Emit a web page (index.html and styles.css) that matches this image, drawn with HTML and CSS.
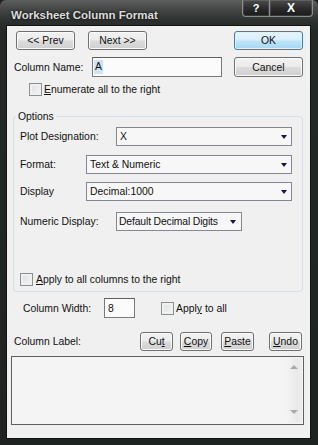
FILE: index.html
```html
<!DOCTYPE html>
<html>
<head>
<meta charset="utf-8">
<link rel="stylesheet" href="styles.css">
</head>
<body>
<div class="window">
  <div class="titlebar">
    <span class="title">Worksheet Column Format</span>
    <div class="caption">
      <span class="cbtn help">?</span><span class="cbtn close">X</span>
    </div>
  </div>
  <div class="client">
    <div class="row row-nav">
      <button class="btn nav prev">&lt;&lt; Prev</button>
      <button class="btn nav next">Next &gt;&gt;</button>
      <button class="btn default ok">OK</button>
    </div>
    <div class="row row-name">
      <span class="lbl lbl-name">Column Name:</span>
      <div class="input name-input"><span class="selected">A</span></div>
      <button class="btn cancel">Cancel</button>
    </div>
    <div class="row row-enum">
      <span class="check"></span><span class="check-text"><u>E</u>numerate all to the right</span>
    </div>
    <div class="group">
      <span class="legend">Options</span>
      <div class="row grow row-plot">
        <span class="lbl lbl-plot">Plot Designation:</span>
        <div class="combo combo-plot"><span class="combo-text">X</span><span class="arrow"></span></div>
      </div>
      <div class="row grow row-format">
        <span class="lbl lbl-short">Format:</span>
        <div class="combo combo-wide"><span class="combo-text">Text &amp; Numeric</span><span class="arrow"></span></div>
      </div>
      <div class="row grow row-display">
        <span class="lbl lbl-short">Display</span>
        <div class="combo combo-wide"><span class="combo-text">Decimal:1000</span><span class="arrow"></span></div>
      </div>
      <div class="row grow row-numeric">
        <span class="lbl lbl-plot">Numeric Display:</span>
        <div class="combo combo-numeric"><span class="combo-text">Default Decimal Digits</span><span class="arrow"></span></div>
      </div>
      <div class="row grow row-apply">
        <span class="check"></span><span class="check-text"><u>A</u>pply to all columns to the right</span>
      </div>
    </div>
    <div class="row row-width">
      <span class="lbl lbl-width">Column Width:</span>
      <div class="input width-input">8</div>
      <span class="check check-all"></span><span class="check-text">Appl<u>y</u> to all</span>
    </div>
    <div class="row row-label">
      <span class="lbl lbl-label">Column Label:</span>
      <button class="btn small cut">Cu<u>t</u></button>
      <button class="btn small copy"><u>C</u>opy</button>
      <button class="btn small paste"><u>P</u>aste</button>
      <button class="btn small undo"><u>U</u>ndo</button>
    </div>
    <div class="memo">
      <div class="vscroll">
        <span class="sarrow up"></span>
        <span class="sarrow down"></span>
      </div>
    </div>
  </div>
</div>
</body>
</html>
```

FILE: styles.css
```css
* { box-sizing: border-box; }
html, body { margin: 0; padding: 0; }
body {
  width: 318px;
  height: 445px;
  overflow: hidden;
  font-family: "Liberation Sans", Arial, sans-serif;
  font-size: 10.4px;
  color: #111;
  background: #1d2320;
}
.window {
  width: 318px;
  height: 445px;
  display: flex;
  flex-direction: column;
  background: linear-gradient(180deg, #5d605e 0px, #474a49 8px, #2e3230 20px, #232926 30px, #1d2320 100%);
  border-radius: 6px 6px 0 0;
}
.titlebar {
  height: 26px;
  flex-shrink: 0;
  display: flex;
  align-items: flex-start;
}
.title {
  font-weight: bold;
  font-size: 11.5px;
  line-height: 13px;
  color: #dcdcdc;
  margin: 9px 0 0 11px;
  text-shadow: 0 0 3px #000;
}
.caption {
  margin-left: auto;
  margin-right: 5px;
  display: flex;
}
.cbtn {
  height: 17px;
  display: flex;
  align-items: center;
  justify-content: center;
  color: #fff;
  font-weight: bold;
  font-size: 11px;
  border: 1px solid #8c8c8c;
  border-top: none;
  background: linear-gradient(#4c4c4c, #2a2a2a 55%, #1b1b1b);
  box-shadow: inset 0 0 0 1px rgba(255, 255, 255, 0.12);
}
.help { width: 28px; border-radius: 0 0 0 4px; }
.close { width: 43px; border-left: none; border-radius: 0 0 4px 0; font-size: 12px; }

.client {
  margin: 0 8px 0 7px;
  height: 412px;
  background: #f0f0f0;
  box-shadow: 0 0 0 1px #101311;
  display: flex;
  flex-direction: column;
}
.row {
  display: flex;
  align-items: center;
  flex-shrink: 0;
}
.lbl { line-height: 13px; white-space: nowrap; }

.btn {
  font-family: "Liberation Sans", Arial, sans-serif;
  font-size: 10.4px;
  color: #111;
  padding: 0;
  margin: 0;
  border: 1px solid #707070;
  border-radius: 3px;
  background: linear-gradient(#f2f2f2 0%, #ebebeb 48%, #dcdcdc 52%, #cfcfcf 100%);
  box-shadow: inset 0 0 0 1px #fbfbfb;
  display: flex;
  align-items: center;
  justify-content: center;
}
.btn.default {
  border-color: #3c7fb1;
  background: linear-gradient(#e9f5fd 0%, #d8effc 48%, #bde4fb 52%, #a5d7f4 100%);
  box-shadow: inset 0 0 0 1px #dff1fc;
}

.row-nav { margin-top: 5px; height: 19px; }
.nav { width: 59px; height: 19px; }
.prev { margin-left: 9px; }
.next { margin-left: 13px; }
.ok { margin-left: 87px; width: 69px; height: 19px; }

.row-name { margin-top: 7px; height: 20px; }
.lbl-name { margin-left: 7px; width: 78px; }
.input {
  height: 20px;
  border: 1px solid #7a7a7a;
  border-top-color: #5f5f5f;
  background: #fbfbfb;
  display: flex;
  align-items: center;
  line-height: 13px;
}
.name-input { width: 130px; padding-left: 1px; }
.selected { background: #cde3f6; padding: 0 1px; line-height: 14px; }
.cancel { margin-left: 12px; width: 69px; height: 20px; }

.check {
  width: 13px;
  height: 13px;
  flex-shrink: 0;
  border: 1px solid #8e8f8f;
  background: linear-gradient(135deg, #dcdcdc, #f7f7f7);
  box-shadow: inset 0 0 0 2px #eef1f4;
}
.check-text { line-height: 13px; white-space: nowrap; }
.row-enum { margin-top: 6px; height: 13px; }
.row-enum .check { margin-left: 22px; }
.row-enum .check-text { margin-left: 2px; }

.group {
  margin: 20px 0 0 6px;
  width: 290px;
  border: 1px solid #d5dfe5;
  border-radius: 3px;
  padding-bottom: 5px;
  flex-shrink: 0;
}
.legend {
  display: block;
  width: fit-content;
  margin: -7px 0 0 2px;
  padding: 0 2px;
  line-height: 13px;
  background: #f0f0f0;
}
.grow { height: 19px; }
.row-plot { margin-top: 4px; }
.lbl-plot { margin-left: 6px; width: 96px; }
.lbl-short { margin-left: 6px; width: 66px; }
.row-format { margin-top: 9px; }
.row-display { margin-top: 8px; }
.row-numeric { margin-top: 11px; }
.row-apply { margin-top: 42px; height: 13px; }
.row-apply .check { margin-left: 6px; }
.row-apply .check-text { margin-left: 3px; }

.combo {
  height: 19px;
  border: 1px solid #828790;
  background: #f7f7f7;
  display: flex;
  align-items: center;
  padding: 0 4px 0 3px;
}
.combo-text { flex: 1; line-height: 13px; white-space: nowrap; }
.arrow {
  width: 0;
  height: 0;
  border-left: 3.5px solid transparent;
  border-right: 3.5px solid transparent;
  border-top: 4px solid #141450;
  margin-top: 1px;
}
.combo-plot { width: 176px; }
.combo-wide { width: 206px; }
.combo-numeric { width: 126px; height: 19px; padding: 0 5px 0 2px; }
.combo-numeric .combo-text { letter-spacing: -0.15px; }

.row-width { margin-top: 6px; height: 20px; }
.lbl-width { margin-left: 16px; width: 81px; }
.width-input { width: 31px; padding-left: 3px; }
.check-all { margin-left: 26px; }
.row-width .check-text { margin-left: 2px; }

.row-label { margin-top: 14px; height: 19px; }
.lbl-label { margin-left: 7px; width: 126px; }
.small { height: 19px; width: 33px; }
.copy { margin-left: 7px; width: 32px; }
.paste { margin-left: 9px; }
.undo { margin-left: 15px; }

.memo {
  margin: 5px 0 0 4px;
  width: 293px;
  height: 69px;
  flex-shrink: 0;
  border: 1px solid #5f5f5f;
  background: #f4f4f4;
  display: flex;
  justify-content: flex-end;
}
.vscroll {
  width: 16px;
  margin: 1px 1px 1px 0;
  background: linear-gradient(90deg, #f4f4f4, #e9e9e9 70%, #ededed);
  display: flex;
  flex-direction: column;
  justify-content: space-between;
  align-items: center;
  padding: 7px 0 9px;
}
.sarrow {
  width: 0;
  height: 0;
  border-left: 4px solid transparent;
  border-right: 4px solid transparent;
}
.sarrow.up { border-bottom: 4px solid #a9a9a9; }
.sarrow.down { border-top: 4px solid #a9a9a9; }
```
